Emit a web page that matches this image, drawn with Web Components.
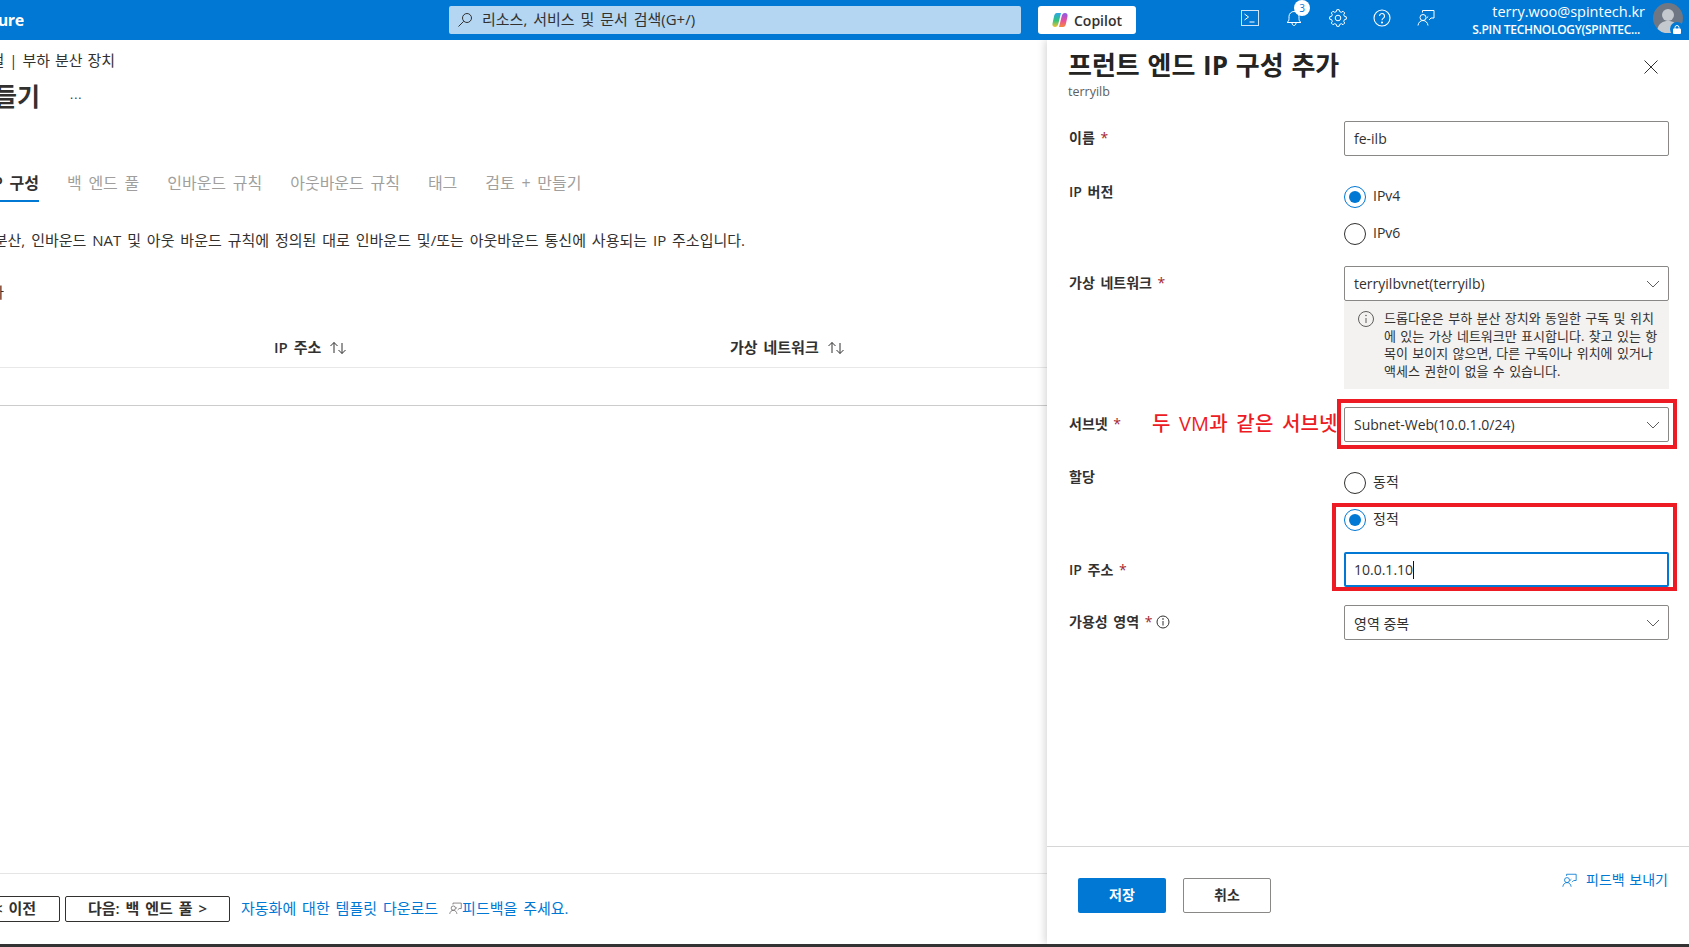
<!DOCTYPE html>
<html lang="ko">
<head>
<meta charset="utf-8">
<title>프런트 엔드 IP 구성 추가</title>
<style>
    html, body { margin: 0; padding: 0; background: #fff; overflow: hidden; }
    body { font-family: "Open Sans", "Noto Sans CJK KR", sans-serif; font-size: 14px; color: #323130; }
</style>
</head>
<body>
<az-shell></az-shell>
<script>
const FEEDBACK = (color, size) => `
    <svg width="${size}" height="${size}" viewBox="0 0 18 18" fill="none" stroke="${color}" stroke-width="1">
        <circle cx="6" cy="8.5" r="3"/>
        <path d="M1 16.5c.4-3 2.4-5 5-5s4.6 2 5 5"/>
        <path d="M5.5 3.5V1.5h11.5v7.5h-3l-2 2"/>
        <path d="M11.2 7.5l-1.7 1.6"/>
    </svg>`;

const CHEVRON = `
    <svg width="14" height="8" viewBox="0 0 14 8" fill="none" stroke="#605e5c" stroke-width="1">
        <path d="M1 1l6 6 6-6"/>
    </svg>`;

function gearPath() {
    // 8 teeth outline around the centre of an 18 box
    let d = '';
    for (let i = 0; i < 8; i++) {
        const a = i * Math.PI / 4;
        const pts = [[-0.26, 6.6], [-0.14, 8.4], [0.14, 8.4], [0.26, 6.6]];
        pts.forEach(([da, r], j) => {
            const x = (9 + r * Math.sin(a + da)).toFixed(2);
            const y = (9 - r * Math.cos(a + da)).toFixed(2);
            d += (i === 0 && j === 0 ? 'M' : 'L') + x + ' ' + y;
        });
    }
    return d + 'Z';
}

class AzTopbar extends HTMLElement {
    constructor() {
        super();
        this.attachShadow({ mode: 'open' });
        this.shadowRoot.innerHTML = `
            <style>
                :host { display: flex; align-items: center; height: 40px; background: #0078d4; color: #fff; overflow: hidden; position: relative; }
                .logo { width: 24px; flex: none; display: flex; justify-content: flex-end; overflow: hidden; white-space: nowrap; font-size: 16px; font-weight: 700; line-height: 40px; letter-spacing: -0.3px; }
                .search { margin-left: 425px; width: 572px; height: 28px; flex: none; background: #b4d6f2; border-radius: 2px; display: flex; align-items: center; color: #323130; font-size: 15px; word-spacing: 2px; }
                .search svg { margin-left: 8px; }
                .search span { margin-left: 9px; line-height: 20px; padding-bottom: 3px; }
                .copilot { margin-left: 17px; width: 98px; height: 28px; flex: none; background: #fff; border-radius: 3px; display: flex; align-items: center; justify-content: center; gap: 6px; color: #323130; font-size: 14px; font-weight: 600; }
                .icons { margin-left: 92px; margin-top: -4px; display: flex; flex: none; }
                .icons > div { width: 44px; height: 40px; display: flex; align-items: center; justify-content: center; position: relative; }
                .badge { position: absolute; left: 22px; top: 2px; width: 16px; height: 16px; border-radius: 50%; background: #fff; color: #0078d4; font-size: 10px; line-height: 16px; text-align: center; }
                .user { margin-left: auto; margin-right: 6px; display: flex; align-items: center; gap: 8px; }
                .who { text-align: right; }
                .mail { font-size: 14.5px; line-height: 19px; }
                .org { font-size: 12px; font-weight: 600; line-height: 17px; padding-right: 5px; letter-spacing: -0.3px; }
                .avatar { position: relative; width: 30px; height: 30px; margin-top: -4px; }
                .lock { position: absolute; right: -1px; bottom: -3px; width: 14px; height: 14px; border-radius: 50%; background: #0078d4; display: flex; align-items: center; justify-content: center; }
            </style>
            <div class="logo">Microsoft Azure</div>
            <div class="search">
                <svg width="16" height="16" viewBox="0 0 16 16" fill="none" stroke="#323130" stroke-width="1">
                    <circle cx="10" cy="6" r="4.5"/><path d="M6.7 9.3L1.5 14.5"/>
                </svg>
                <span>리소스, 서비스 및 문서 검색(G+/)</span>
            </div>
            <div class="copilot">
                <svg width="16" height="16" viewBox="0 0 16 16">
                    <defs>
                        <linearGradient id="c1" x1="0" y1="0" x2="0" y2="1"><stop offset="0" stop-color="#2aa7e8"/><stop offset=".55" stop-color="#35c27a"/><stop offset="1" stop-color="#f2c230"/></linearGradient>
                        <linearGradient id="c2" x1="0" y1="0" x2="0" y2="1"><stop offset="0" stop-color="#8a5be8"/><stop offset=".55" stop-color="#e84f9c"/><stop offset="1" stop-color="#f58a3c"/></linearGradient>
                    </defs>
                    <path fill="url(#c1)" d="M5 1h4L6.500 11c-.5 2.500-1.500 4-3.500 4-1.800 0-3-1.300-2.500-3.500l1.300-6C2.300 2.700 3 1 5 1z"/>
                    <path fill="url(#c2)" d="M11 15H7l2.500-10C10 2.500 11 1 13 1c1.800 0 3 1.300 2.500 3.500l-1.300 6c-.5 2.800-1.200 4.500-3.200 4.500z"/>
                </svg>
                <span>Copilot</span>
            </div>
            <div class="icons">
                <div><svg width="18" height="16" viewBox="0 0 18 16" fill="none" stroke="#fff" stroke-width="1">
                    <rect x=".5" y=".5" width="17" height="15" stroke="#cfe4f6"/><path d="M3.500 4l4 3-4 3M8.500 12h5"/>
                </svg></div>
                <div><svg width="18" height="18" viewBox="0 0 18 18" fill="none" stroke="#fff" stroke-width="1">
                    <path d="M2 13.500c1.500-1 2-2 2-4V7.500a5 5 0 0 1 10 0v2c0 2 .5 3 2 4z"/><path d="M7 14c0 1.500 1 2.500 2 2.500s2-1 2-2.500"/>
                </svg><span class="badge">3</span></div>
                <div><svg width="18" height="18" viewBox="0 0 18 18" fill="none" stroke="#fff" stroke-width="1">
                    <path d="${gearPath()}"/><circle cx="9" cy="9" r="2.800"/>
                </svg></div>
                <div><svg width="18" height="18" viewBox="0 0 18 18" fill="none" stroke="#fff" stroke-width="1.100">
                    <circle cx="9" cy="9" r="8"/><path d="M6.500 7a2.500 2.500 0 1 1 3.900 2.100c-.9.600-1.400 1.100-1.400 2.200"/><circle cx="9" cy="13.500" r=".5" fill="#fff"/>
                </svg></div>
                <div>${FEEDBACK('#fff', 18)}</div>
            </div>
            <div class="user">
                <div class="who">
                    <div class="mail">terry.woo@spintech.kr</div>
                    <div class="org">S.PIN TECHNOLOGY(SPINTEC...</div>
                </div>
                <div class="avatar">
                    <svg width="30" height="30" viewBox="0 0 30 30">
                        <circle cx="15" cy="15" r="15" fill="#6e7783"/>
                        <circle cx="15" cy="12" r="6" fill="#c4c9cf"/>
                        <path d="M4.500 26c1-5.500 5.500-8 10.500-8s9.500 2.500 10.500 8a15 15 0 0 1-21 0z" fill="#c4c9cf"/>
                    </svg>
                    <div class="lock"><svg width="8" height="9" viewBox="0 0 8 9"><rect y="3.500" width="8" height="5.500" rx="1" fill="#fff"/><path d="M2 4V2.500a2 2 0 0 1 4 0V4" fill="none" stroke="#fff"/></svg></div>
                </div>
            </div>
        `;
    }
}

class AzMain extends HTMLElement {
    constructor() {
        super();
        this.attachShadow({ mode: 'open' });
        this.shadowRoot.innerHTML = `
            <style>
                :host { display: flex; flex-direction: column; background: #fff; overflow: hidden; min-width: 0; }
                .clip { display: flex; justify-content: flex-end; overflow: hidden; white-space: nowrap; flex: none; }
                .crumb { margin-top: 10px; width: 115px; line-height: 20px; font-size: 15px; word-spacing: 1px; }
                .head { margin-top: 10px; display: flex; align-items: center; height: 32px; }
                .title { width: 40px; font-size: 25px; font-weight: 700; line-height: 32px; }
                .more { margin-left: 30px; font-size: 12px; line-height: 12px; letter-spacing: 1px; margin-top: -2px; }
                .tabs { margin-top: 60px; display: flex; height: 30px; font-size: 16px; line-height: 22px; word-spacing: 2.500px; color: #a19f9d; }
                .tab { margin-left: 28px; white-space: nowrap; }
                .tab.on { margin-left: 0; width: 39px; height: 30px; box-sizing: border-box; border-bottom: 2px solid #0078d4; color: #323130; font-weight: 600; }
                .desc { margin-top: 28px; width: 745px; line-height: 20px; font-size: 15px; word-spacing: 2px; }
                .add { margin-top: 32px; width: 4px; line-height: 20px; font-size: 15px; }
                .thead { margin-top: 35px; display: grid; grid-template-columns: 274px 456px 1fr; padding-bottom: 10px; border-bottom: 1px solid #e8e8e8; line-height: 20px; font-size: 15px; font-weight: 600; word-spacing: 2px; }
                .th { display: flex; align-items: center; gap: 8px; white-space: nowrap; }
                .th svg { margin-top: 2px; }
                .row { height: 37px; border-bottom: 1px solid #ccc; flex: none; }
                .foot { margin-top: auto; border-top: 1px solid #e5e5e5; padding: 22px 0 22px; display: flex; align-items: center; gap: 5px; }
                .btn { height: 26px; box-sizing: border-box; border: 1px solid #323130; border-radius: 2px; background: #fff; font-size: 15px; font-weight: 600; word-spacing: 2px; line-height: 20px; padding-bottom: 2px; display: flex; align-items: center; justify-content: center; white-space: nowrap; }
                .prev { width: 90px; margin-left: -30px; }
                .next { width: 165px; }
                .links { margin-left: 6px; color: #0078d4; font-size: 15px; word-spacing: 2px; line-height: 20px; padding-bottom: 2px; display: flex; align-items: center; white-space: nowrap; }
                .links svg { margin-left: 11px; }
            </style>
            <div class="clip crumb"><span>포털 | 부하 분산 장치</span></div>
            <div class="head">
                <div class="clip title"><span>만들기</span></div>
                <div class="more">...</div>
            </div>
            <div class="tabs">
                <div class="clip tab on"><span>프런트 엔드 IP 구성</span></div>
                <div class="tab">백 엔드 풀</div>
                <div class="tab">인바운드 규칙</div>
                <div class="tab">아웃바운드 규칙</div>
                <div class="tab">태그</div>
                <div class="tab">검토 + 만들기</div>
            </div>
            <div class="clip desc"><span>부하 분산, 인바운드 NAT 및 아웃 바운드 규칙에 정의된 대로 인바운드 및/또는 아웃바운드 통신에 사용되는 IP 주소입니다.</span></div>
            <div class="clip add"><span>추가</span></div>
            <div class="thead">
                <span></span>
                <div class="th">IP 주소 ${this._sort()}</div>
                <div class="th">가상 네트워크 ${this._sort()}</div>
            </div>
            <div class="row"></div>
            <div class="foot">
                <div class="btn prev">&lt; 이전</div>
                <div class="btn next">다음: 백 엔드 풀 &gt;</div>
                <div class="links">
                    <span>자동화에 대한 템플릿 다운로드</span>
                    ${FEEDBACK('#605e5c', 13)}
                    <span>피드백을 주세요.</span>
                </div>
            </div>
        `;
    }

    _sort() {
        return `<svg width="18" height="14" viewBox="0 0 18 14" fill="none" stroke="#323130" stroke-width="1">
            <path d="M5 12V1.500M1.500 5L5 1.500 8.500 5"/><path d="M13 2v10.500M9.500 9l3.500 3.500L16.500 9"/>
        </svg>`;
    }
}

class AzField extends HTMLElement {
    constructor() {
        super();
        this.attachShadow({ mode: 'open' });
        const off = this.getAttribute('offset') || '7';
        this.shadowRoot.innerHTML = `
            <style>
                :host { display: grid; grid-template-columns: 275px 325px; position: relative; }
                .label { display: flex; align-items: center; gap: 4px; height: 20px; margin-top: ${off}px; line-height: 20px; font-size: 14px; font-weight: 600; word-spacing: 2px; white-space: nowrap; }
                .star { color: #a4262c; font-weight: 400; }
                .control { min-width: 0; }
                svg { flex: none; }
            </style>
            <div class="label"><span>${this.getAttribute('label')}${this.hasAttribute('required') ? ' <span class="star">*</span>' : ''}</span><slot name="extra"></slot></div>
            <div class="control"><slot></slot></div>
        `;
    }
}

class AzInput extends HTMLElement {
    constructor() {
        super();
        this.attachShadow({ mode: 'open' });
        const focus = this.hasAttribute('focused');
        const select = this.hasAttribute('select');
        this.shadowRoot.innerHTML = `
            <style>
                :host { display: flex; align-items: center; justify-content: space-between; height: 35px; box-sizing: border-box; padding: 0 ${focus ? 8 : 9}px; background: #fff; border: ${focus ? '2px solid #0078d4' : '1px solid #8a8886'}; border-radius: 2px; font-size: 14px; color: #323130; position: relative; }
                .caret { display: inline-block; width: 1px; height: 18px; background: #111; vertical-align: -4px; }
                svg { margin-right: -1px; }
            </style>
            <span><slot></slot>${focus ? '<span class="caret"></span>' : ''}</span>
            ${select ? CHEVRON : ''}
        `;
    }
}

class AzRadio extends HTMLElement {
    constructor() {
        super();
        this.attachShadow({ mode: 'open' });
        const on = this.hasAttribute('checked');
        this.shadowRoot.innerHTML = `
            <style>
                :host { display: flex; align-items: center; gap: 7px; height: 22px; font-size: 14px; line-height: 20px; color: #323130; }
                .dot { width: 22px; height: 22px; box-sizing: border-box; border-radius: 50%; border: 1px solid ${on ? '#0078d4' : '#323130'}; display: flex; align-items: center; justify-content: center; flex: none; }
                .dot i { width: 12px; height: 12px; border-radius: 50%; background: ${on ? '#0078d4' : 'transparent'}; display: block; }
                .txt { padding-bottom: 2px; }
            </style>
            <span class="dot"><i></i></span><span class="txt"><slot></slot></span>
        `;
    }
}

class AzPanel extends HTMLElement {
    constructor() {
        super();
        this.attachShadow({ mode: 'open' });
        this.shadowRoot.innerHTML = `
            <style>
                :host { display: flex; flex-direction: column; background: #fff; box-shadow: -2px 0 8px rgba(0,0,0,.16); position: relative; min-width: 0; }
                .top { padding: 9px 20px 0 21px; display: flex; justify-content: space-between; flex: none; }
                h1 { margin: 0; font-size: 26px; line-height: 32px; font-weight: 700; word-spacing: 1px; color: #252423; white-space: nowrap; }
                .sub { margin-top: 2px; font-size: 12.5px; line-height: 18px; color: #605e5c; }
                .close { margin: 11px 11px 0 0; height: 14px; }
                .form { padding: 20px 20px 0 22px; flex: 1; display: flex; flex-direction: column; }
                .foot { flex: none; height: 98px; box-sizing: border-box; border-top: 1px solid #d6d6d6; padding: 31px 21px 0 31px; display: flex; gap: 17px; align-items: flex-start; }
                .btn { width: 88px; height: 35px; box-sizing: border-box; border-radius: 2px; display: flex; align-items: center; justify-content: center; font-size: 14px; font-weight: 600; line-height: 20px; padding-bottom: 2px; }
                .save { background: #0078d4; color: #fff; }
                .cancel { background: #fff; border: 1px solid #8a8886; color: #323130; }
                .send { margin-left: auto; display: flex; align-items: center; gap: 9px; margin-top: -8px; color: #0078d4; font-size: 14px; line-height: 20px; word-spacing: 1px; }
            </style>
            <div class="top">
                <div>
                    <h1>프런트 엔드 IP 구성 추가</h1>
                    <div class="sub">terryilb</div>
                </div>
                <svg class="close" width="14" height="14" viewBox="0 0 14 14" fill="none" stroke="#323130" stroke-width="1"><path d="M.5.5l13 13M13.500.5l-13 13"/></svg>
            </div>
            <div class="form"><slot></slot></div>
            <div class="foot">
                <div class="btn save">저장</div>
                <div class="btn cancel">취소</div>
                <div class="send">${FEEDBACK('#0078d4', 15)}<span>피드백 보내기</span></div>
            </div>
        `;
    }
}

class AzNote extends HTMLElement {
    constructor() {
        super();
        this.attachShadow({ mode: 'open' });
        this.shadowRoot.innerHTML = `
            <style>
                :host { display: flex; height: 88px; box-sizing: border-box; padding: 9px 8px 0 13px; gap: 9px; background: #f3f2f1; font-size: 13px; line-height: 17.6px; word-spacing: 1px; color: #323130; white-space: nowrap; }
                svg { flex: none; }
            </style>
            <svg width="18" height="18" viewBox="0 0 18 18" fill="none" stroke="#605e5c" stroke-width="1">
                <circle cx="9" cy="9" r="7.500"/><path d="M9 8v5"/><circle cx="9" cy="5.500" r=".4"/>
            </svg>
            <div><slot></slot></div>
        `;
    }
}

class AzShell extends HTMLElement {
    constructor() {
        super();
        this.attachShadow({ mode: 'open' });
        this.shadowRoot.innerHTML = `
            <style>
                :host { display: grid; grid-template-columns: 1047px 642px; grid-template-rows: 40px 904px 3px; height: 947px; width: 1689px; overflow: hidden; }
                az-topbar { grid-column: 1 / 3; z-index: 2; }
                .bar { grid-column: 1 / 3; background: #333; z-index: 2; }
                .mt21 { margin-top: 21px; }
                .mt18 { margin-top: 18px; }
                .mt30 { margin-top: 30px; }
                .stack { display: flex; flex-direction: column; gap: 15px; }
                .mark { position: absolute; border: 4px solid #ed1c24; box-sizing: border-box; pointer-events: none; }
                .mark1 { left: 268px; top: -8px; width: 340px; height: 50px; }
                .mark2 { left: 263px; top: -49px; width: 345px; height: 88px; z-index: 1; }
                .say { position: absolute; left: 83px; top: 2px; color: #ed1c24; font-size: 20px; line-height: 30px; font-weight: 500; word-spacing: 3px; letter-spacing: .2px; white-space: nowrap; }
            </style>
            <az-topbar></az-topbar>
            <az-main></az-main>
            <az-panel>
                <az-field label="이름" required>
                    <az-input>fe-ilb</az-input>
                </az-field>
                <az-field label="IP 버전" offset="-4" class="mt30">
                    <div class="stack"><az-radio checked>IPv4</az-radio><az-radio>IPv6</az-radio></div>
                </az-field>
                <az-field label="가상 네트워크" required offset="7" class="mt21">
                    <az-input select>terryilbvnet(terryilb)</az-input>
                    <az-note>드롭다운은 부하 분산 장치와 동일한 구독 및 위치<br>에 있는 가상 네트워크만 표시합니다. 찾고 있는 항<br>목이 보이지 않으면, 다른 구독이나 위치에 있거나<br>액세스 권한이 없을 수 있습니다.</az-note>
                </az-field>
                <az-field label="서브넷" required class="mt18">
                    <az-input select>Subnet-Web(10.0.1.0/24)</az-input>
                    <div class="say">두 VM과 같은 서브넷</div>
                    <div class="mark mark1"></div>
                </az-field>
                <az-field label="할당" offset="-5" class="mt30">
                    <div class="stack"><az-radio>동적</az-radio><az-radio checked>정적</az-radio></div>
                </az-field>
                <az-field label="IP 주소" required offset="8" class="mt21">
                    <az-input focused>10.0.1.10</az-input>
                    <div class="mark mark2"></div>
                </az-field>
                <az-field label="가용성 영역" required offset="7" class="mt18">
                    <svg slot="extra" width="14" height="14" viewBox="0 0 14 14" fill="none" stroke="#323130" stroke-width="1"><circle cx="7" cy="7" r="6"/><path d="M7 6v4.500"/><circle cx="7" cy="4" r=".4"/></svg>
                    <az-input select>영역 중복</az-input>
                </az-field>
            </az-panel>
            <div class="bar"></div>
        `;
    }
}

customElements.define('az-topbar', AzTopbar);
customElements.define('az-main', AzMain);
customElements.define('az-field', AzField);
customElements.define('az-input', AzInput);
customElements.define('az-radio', AzRadio);
customElements.define('az-note', AzNote);
customElements.define('az-panel', AzPanel);
customElements.define('az-shell', AzShell);
</script>
</body>
</html>
